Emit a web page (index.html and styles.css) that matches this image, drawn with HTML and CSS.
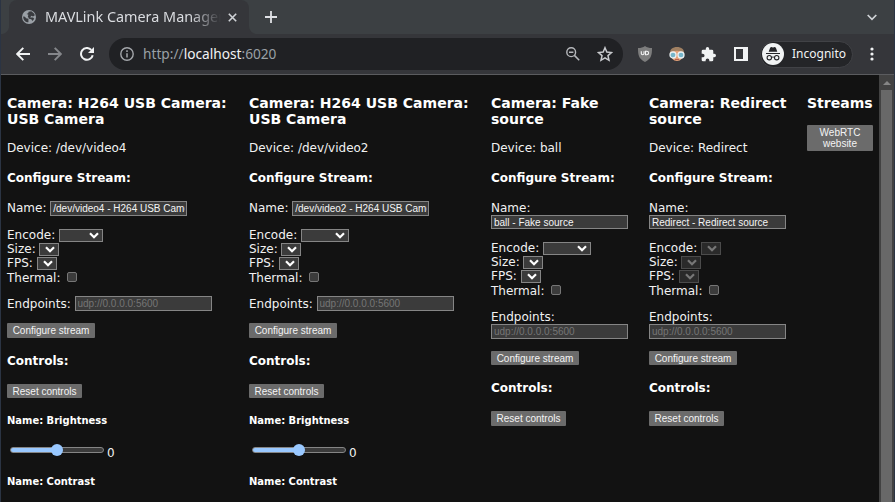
FILE: index.html
```html
<!DOCTYPE html>
<html lang="en">
<head>
<meta charset="utf-8">
<title>MAVLink Camera Manager</title>
<link rel="stylesheet" href="styles.css">
</head>
<body>
<svg width="0" height="0" class="defs"><defs>
<symbol id="chev" viewBox="0 0 10 7"><path d="M1 1.200 5 5.200 9 1.200" fill="none" stroke="currentColor" stroke-width="2.200"/></symbol>
</defs></svg>
<div class="window">
  <header class="tabstrip">
    <div class="prev-tab"></div>
    <div class="tab">
      <svg class="globe" viewBox="0 0 24 24"><circle cx="12" cy="12" r="12" fill="#9aa0a6"/><path d="M2 11c3 0 4 1 5 3l4 1v6c-5 0-9-4-9-10ZM11 3l5-1c3 2 5 4 6 7l-3 2-3-1-2 3h5l2 2-3 4-2-3-4-1-2-4 1-3-3-1 3-2Z" fill="#393b3f"/></svg>
      <span class="tab-title">MAVLink Camera Manager</span>
      <svg class="close" viewBox="0 0 9 9"><path d="m.8.8 7.4 7.4m0-7.4L.8 8.2" stroke="#d0d3d7" stroke-width="1.6"/></svg>
    </div>
    <svg class="flare" viewBox="0 0 8 8"><path d="M0 0a8 8 0 0 0 8 8H0Z" fill="#35363a"/></svg>
    <svg class="plus" viewBox="0 0 12 12"><path d="M6 0v12M0 6h12" stroke="#dfe1e5" stroke-width="1.8"/></svg>
    <svg class="tab-menu" viewBox="0 0 10 7"><path d="m.7 1 4.3 4.3L9.3 1" fill="none" stroke="#d0d3d7" stroke-width="1.7"/></svg>
  </header>
  <nav class="toolbar">
    <svg class="nav back" viewBox="0 0 14 14"><path d="M14 7H1.5M7.3.8 1.2 7l6.1 6.2" fill="none" stroke="#f1f3f4" stroke-width="1.9"/></svg>
    <svg class="nav forward" viewBox="0 0 14 14"><path d="M0 7h12.5M6.7.8 12.8 7l-6.1 6.2" fill="none" stroke="#85878b" stroke-width="1.9"/></svg>
    <svg class="nav reload" viewBox="0 0 14 14"><path d="M12.7 8.2A5.9 5.9 0 1 1 11.3 2.9" fill="none" stroke="#f1f3f4" stroke-width="2"/><path d="M14 0v6H8Z" fill="#f1f3f4"/></svg>
    <div class="omnibox">
      <svg class="info" viewBox="0 0 14 14"><circle cx="7" cy="7" r="6.2" fill="none" stroke="#a4a7ab" stroke-width="1.4"/><path d="M7 6.2v4.3M7 3.3v1.6" stroke="#a4a7ab" stroke-width="1.5"/></svg>
      <span class="url">http://<b>localhost</b>:6020</span>
      <svg class="zoom" viewBox="0 0 14 14"><circle cx="5.2" cy="5.2" r="4.4" fill="none" stroke="#b6b8bc" stroke-width="1.4"/><path d="m8.4 8.4 4.8 4.8M3 5.2h4.4" stroke="#b6b8bc" stroke-width="1.5"/></svg>
      <svg class="star" viewBox="0 0 14 14"><path d="m7 1.5 1.6 3.8 4.1.4-3.1 2.7.9 4.1L7 10.3l-3.5 2.2.9-4.1-3.1-2.7 4.1-.4Z" fill="none" stroke="#c8cacd" stroke-width="1.3"/></svg>
    </div>
    <svg class="shield" viewBox="0 0 14 16"><path d="M7 0c2 1.5 4 2 7 2 0 7-.5 10.500-7 14C.5 12.500 0 9 0 2c3 0 5-.5 7-2Z" fill="#7d7d7d"/><path d="M3.300 5.300v2.200c0 1.600 2.700 1.600 2.700 0V5.300M7.500 5.300h1.300c2.400 0 2.400 3.400 0 3.400H7.500Z" fill="none" stroke="#f4f4f4" stroke-width="1.100"/></svg>
    <svg class="face" viewBox="0 0 16 16"><path d="M1 9C0 3 4 1 8 1s8 2 7 8Z" fill="#a08062"/><path d="M2 7c2-3 10-3 12 0 0 5-2 8-6 8S2 12 2 7Z" fill="#e4a178"/><circle cx="4" cy="9" r="3" fill="#75b5c9" stroke="#e9f0f2" stroke-width="1.300"/><circle cx="12" cy="9" r="3" fill="#75b5c9" stroke="#e9f0f2" stroke-width="1.300"/><path d="M6 13.500h4" stroke="#b76150"/></svg>
    <svg class="puzzle" viewBox="1 1 22 22"><path d="M20.500 11H19V7a2 2 0 0 0-2-2h-4V3.500a2.500 2.500 0 0 0-5 0V5H4a2 2 0 0 0-2 2v3.800h1.500a2.700 2.700 0 0 1 0 5.400H2V20a2 2 0 0 0 2 2h3.800v-1.500a2.700 2.700 0 0 1 5.400 0V22H17a2 2 0 0 0 2-2v-4h1.500a2.500 2.500 0 0 0 0-5Z" fill="#f1f3f4"/></svg>
    <svg class="panel" viewBox="0 0 14 14"><path d="M0 0h14v14H0ZM2 2v10h7V2Z" fill="#f1f3f4" fill-rule="evenodd"/></svg>
    <div class="chip">
      <svg class="incognito" viewBox="0 0 22 22"><circle cx="11" cy="11" r="11" fill="#f1f3f4"/><path d="m6.700 8.700 1.400-4 1.100-.6 1.800.5 1.800-.5 1.100.6 1.400 4Z" fill="#242528"/><path d="M4 10.500h14M9.500 14.500c1-.6 2-.6 3 0" stroke="#242528" fill="none"/><circle cx="7.300" cy="14.700" r="2.200" fill="none" stroke="#242528" stroke-width="1.100"/><circle cx="14.700" cy="14.700" r="2.200" fill="none" stroke="#242528" stroke-width="1.100"/></svg>
      <span>Incognito</span>
    </div>
    <svg class="dots" viewBox="0 0 4 14"><circle cx="2" cy="2" r="1.600" fill="#f1f3f4"/><circle cx="2" cy="7" r="1.600" fill="#f1f3f4"/><circle cx="2" cy="12" r="1.600" fill="#f1f3f4"/></svg>
  </nav>
  <div class="viewport">
    <main>
      <section class="camera wide">
        <h3>Camera: H264 USB Camera: USB Camera</h3>
        <p class="device">Device: /dev/video4</p>
        <h4>Configure Stream:</h4>
        <label class="field name"><span>Name:</span> <input type="text" value="/dev/video4 - H264 USB Camera"></label>
        <div class="row first">Encode: <span class="select w44"><svg><use href="#chev"/></svg></span></div>
        <div class="row">Size: <span class="select"><svg><use href="#chev"/></svg></span></div>
        <div class="row">FPS: <span class="select"><svg><use href="#chev"/></svg></span></div>
        <label class="row thermal">Thermal: <input type="checkbox"></label>
        <label class="field endpoints">Endpoints: <input type="text" placeholder="udp://0.0.0.0:5600"></label>
        <button class="configure">Configure stream</button>
        <h4 class="controls">Controls:</h4>
        <button class="reset">Reset controls</button>
        <h5>Name: Brightness</h5>
        <div class="range"><span class="track"><span class="thumb"></span></span>0</div>
        <h5 class="contrast">Name: Contrast</h5>
      </section>
      <section class="camera wide">
        <h3>Camera: H264 USB Camera: USB Camera</h3>
        <p class="device">Device: /dev/video2</p>
        <h4>Configure Stream:</h4>
        <label class="field name"><span>Name:</span> <input type="text" value="/dev/video2 - H264 USB Camera"></label>
        <div class="row first">Encode: <span class="select w48"><svg><use href="#chev"/></svg></span></div>
        <div class="row">Size: <span class="select"><svg><use href="#chev"/></svg></span></div>
        <div class="row">FPS: <span class="select"><svg><use href="#chev"/></svg></span></div>
        <label class="row thermal">Thermal: <input type="checkbox"></label>
        <label class="field endpoints">Endpoints: <input type="text" placeholder="udp://0.0.0.0:5600"></label>
        <button class="configure">Configure stream</button>
        <h4 class="controls">Controls:</h4>
        <button class="reset">Reset controls</button>
        <h5>Name: Brightness</h5>
        <div class="range"><span class="track"><span class="thumb"></span></span>0</div>
        <h5 class="contrast">Name: Contrast</h5>
      </section>
      <section class="camera narrow">
        <h3>Camera: Fake source</h3>
        <p class="device">Device: ball</p>
        <h4>Configure Stream:</h4>
        <label class="field name"><span>Name:</span> <input type="text" value="ball - Fake source"></label>
        <div class="row first">Encode: <span class="select w48"><svg><use href="#chev"/></svg></span></div>
        <div class="row">Size: <span class="select"><svg><use href="#chev"/></svg></span></div>
        <div class="row">FPS: <span class="select"><svg><use href="#chev"/></svg></span></div>
        <label class="row thermal">Thermal: <input type="checkbox"></label>
        <label class="field endpoints">Endpoints: <input type="text" placeholder="udp://0.0.0.0:5600"></label>
        <button class="configure">Configure stream</button>
        <h4 class="controls">Controls:</h4>
        <button class="reset">Reset controls</button>
      </section>
      <section class="camera narrow">
        <h3>Camera: Redirect source</h3>
        <p class="device">Device: Redirect</p>
        <h4>Configure Stream:</h4>
        <label class="field name"><span>Name:</span> <input type="text" value="Redirect - Redirect source"></label>
        <div class="row first">Encode: <span class="select off"><svg><use href="#chev"/></svg></span></div>
        <div class="row">Size: <span class="select off"><svg><use href="#chev"/></svg></span></div>
        <div class="row">FPS: <span class="select off"><svg><use href="#chev"/></svg></span></div>
        <label class="row thermal">Thermal: <input type="checkbox"></label>
        <label class="field endpoints">Endpoints: <input type="text" placeholder="udp://0.0.0.0:5600"></label>
        <button class="configure">Configure stream</button>
        <h4 class="controls">Controls:</h4>
        <button class="reset">Reset controls</button>
      </section>
      <section class="streams">
        <h3>Streams</h3>
        <button class="webrtc">WebRTC website</button>
      </section>
    </main>
    <aside class="scrollbar"><svg viewBox="0 0 8 4"><path d="m4 0 4 4H0Z" fill="#858585"/></svg><div class="scroll-thumb"></div></aside>
  </div>
</div>
</body>
</html>
```
FILE: styles.css
```css
* { box-sizing: border-box; }
html, body { margin: 0; height: 502px; overflow: hidden; }
body { background: #121212; color: #f1f1f1; font: 12px/14px "DejaVu Sans", sans-serif; }
svg { display: block; flex: none; }
.defs { position: absolute; }
.window { height: 502px; border: solid #2b3443; border-width: 0 1px; display: flex; flex-direction: column; }

.tabstrip { height: 34px; flex: none; background: #3c4043; display: flex; align-items: center; }
.prev-tab { width: 8px; height: 34px; flex: none; background: radial-gradient(circle at 0 0, #3c4043 7.5px, #35363a 8.5px) 0 100% / 8px 8px no-repeat; }
.tab { width: 240px; height: 34px; background: #35363a; border-radius: 8px 8px 0 0; display: flex; align-items: center; padding-left: 13px; flex: none; }
.globe { width: 14px; height: 14px; }
.tab-title { font: 14.4px/20px "Noto Sans", sans-serif; color: #dadce0; margin: 0 0 0 9px; width: 176px; overflow: hidden; white-space: nowrap; -webkit-mask-image: linear-gradient(90deg, #000 145px, transparent 176px); mask-image: linear-gradient(90deg, #000 145px, transparent 176px); }
.close { width: 9px; height: 9px; margin-left: 7px; }
.flare { width: 8px; height: 8px; align-self: flex-end; }
.plus { width: 12px; height: 12px; margin-left: 8px; }
.tab-menu { width: 10px; height: 7px; margin: 0 17px 0 auto; }

.toolbar { height: 41px; flex: none; background: #35363a; border-bottom: 1px solid #5b5c5f; display: flex; align-items: center; padding-left: 15px; }
.nav { width: 14px; height: 14px; margin-right: 18px; }
.reload { margin-right: 15px; }
.omnibox { width: 514px; height: 32px; border-radius: 16px; background: #202124; display: flex; align-items: center; padding: 0 11px; flex: none; }
.info { width: 14px; height: 14px; margin-right: 9px; }
.url { font: 13.7px/20px "Noto Sans", sans-serif; color: #9aa0a6; }
.url b { font-weight: 400; color: #f1f3f4; }
.zoom { width: 14px; height: 14px; margin-left: auto; }
.star { width: 16px; height: 16px; margin: 0 -1px 0 17px; }
.shield { width: 14px; height: 16px; margin-left: 15px; }
.face { width: 16px; height: 16px; margin-left: 17px; }
.puzzle { width: 15px; height: 15px; margin-left: 16px; }
.panel { width: 14px; height: 14px; margin-left: 18px; }
.chip { width: 93px; height: 27px; margin-left: 12px; border: 1px solid #414246; border-radius: 14px; background: #242528; display: flex; align-items: center; gap: 8px; padding-left: 1px; font: 12px/18px "Noto Sans", sans-serif; color: #f1f3f4; flex: none; }
.incognito { width: 22px; height: 22px; }
.dots { width: 4px; height: 14px; margin-left: 17px; }

.viewport { flex: 1; min-height: 0; display: flex; }
main { flex: 1; min-width: 0; display: flex; align-items: flex-start; gap: 20px; padding: 20px 0 0 6px; overflow: hidden; }
.camera { flex: none; }
.wide { width: 222px; }
.narrow { width: 138px; }
.streams { width: 66px; flex: none; }
h3, h4, h5, p { margin: 0; }
h3 { font-size: 14.04px; line-height: 16px; color: #fff; }
h4 { font-size: 12px; line-height: 14px; margin-top: 16px; color: #fff; }
h5 { font-size: 9.96px; line-height: 12px; margin-top: 17px; color: #fff; }
.device { margin-top: 14px; }
.field { display: flex; align-items: center; gap: 3.8px; white-space: nowrap; height: 15px; }
.name { margin-top: 16px; }
.wide .name span { margin-top: -2px; }
.field input { width: 137px; height: 15px; flex: none; margin: 0; padding: 1px 1px 1px 2px; border: 1px solid #858585; border-radius: 0; background: #3b3b3b; color: #f4f4f4; font: 10px/11px "Liberation Sans", sans-serif; outline: 0; }
.field input::placeholder { color: #757575; }
.row { height: 14px; display: flex; align-items: center; gap: 3.8px; }
.first { margin-top: 12px; }
.select { width: 20px; height: 13px; border: 1px solid #858585; background: #3b3b3b; color: #fff; display: flex; align-items: center; justify-content: flex-end; padding-right: 3px; }
.select svg { width: 10px; height: 7px; }
.w44 { width: 44px; }
.w48 { width: 48px; }
.off { background: #2a2a2a; border-color: #4b4b4b; color: #777; }
.thermal { height: 15px; }
.thermal input { appearance: none; width: 10px; height: 10px; margin: -1px 0 0 2.4px; border: 1px solid #767676; border-radius: 2px; background: #3b3b3b; }
.endpoints { margin-top: 11px; }
.narrow .field { height: 29px; flex-direction: column; align-items: flex-start; gap: 0; }
.narrow .name input { height: 14px; }
.narrow .first { margin-top: 11px; }
.narrow .endpoints { margin-top: 12px; }
button { display: block; border: 0; border-radius: 1px; margin: 0; padding: 0; background: #6b6b6b; color: #f4f4f4; font: 10px/11px "Liberation Sans", sans-serif; }
.configure { width: 88px; height: 15px; margin-top: 12px; }
.narrow .configure { height: 14px; }
.controls { margin-top: 16px; }
.reset { width: 75px; height: 14px; margin-top: 16px; }
.narrow .reset { height: 15px; }
.range { height: 14px; margin-top: 19px; display: flex; gap: 3px; padding-left: 3px; }
.track { width: 94px; height: 6px; margin-top: 1px; border: 1px solid #858585; border-radius: 3px; background: linear-gradient(90deg, #99c8ff 50%, #3b3b3b 50%); display: flex; align-items: center; justify-content: center; }
.thumb { width: 12px; height: 12px; border-radius: 50%; background: #99c8ff; flex: none; }
.contrast { margin-top: 16px; }
.webrtc { width: 66px; height: 26px; margin-top: 14px; padding: 0 8px; }
.scrollbar { width: 15px; flex: none; background: #424242; padding: 6px 2px 0; display: flex; flex-direction: column; align-items: center; }
.scrollbar svg { width: 8px; height: 4px; }
.scroll-thumb { width: 11px; flex: 1; margin-top: 5px; background: #686868; }
```
